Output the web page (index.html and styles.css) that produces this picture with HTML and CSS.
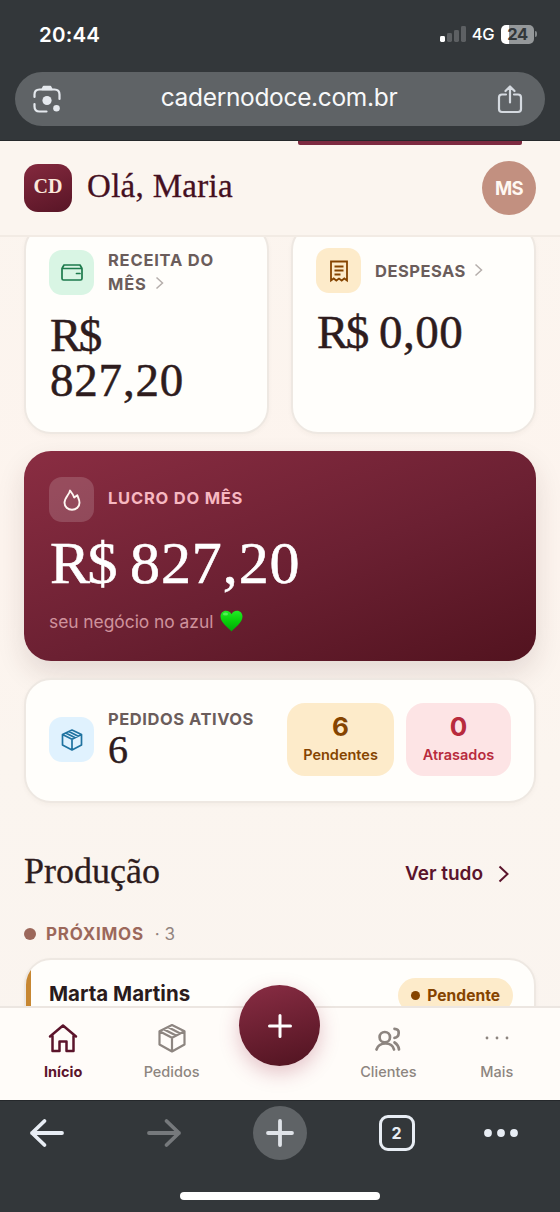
FILE: index.html
```html
<!DOCTYPE html>
<html lang="pt-BR">
<head>
<meta charset="utf-8">
<meta name="viewport" content="width=device-width">
<title>Caderno Doce</title>
<link rel="stylesheet" href="styles.css">
</head>
<body>
<div class="phone">
  <div class="browser-top">
    <div class="status">
      <span class="clock">20:44</span>
      <div class="status-right">
        <svg width="26" height="16" viewBox="0 0 26 16"><rect x="0" y="10" width="5" height="6" rx="1.4" fill="#fff"/><g fill="#5d6063"><rect x="7" y="7" width="5" height="9" rx="1.4"/><rect x="14" y="4" width="5" height="12" rx="1.4"/><rect x="21" y="0" width="5" height="16" rx="1.4"/></g></svg>
        <span class="net">4G</span>
        <div class="battery"><span class="level">24</span><i class="battery-tip"></i></div>
      </div>
    </div>
    <div class="url-bar">
      <svg width="28" height="28" viewBox="0 0 28 28" fill="none" stroke="#e5e9ee" stroke-width="2.2" stroke-linecap="round"><path d="M1.500 12V9.500Q1.500 4.500 6.500 4.500H21.500Q26.500 4.500 26.500 9.500V14M1.500 19V21.500Q1.500 26.500 6.500 26.500H13.500"/><path d="M9 4.500L10.500 1.500H17.500L19 4.500Z" fill="#e5e9ee" stroke-width="1.500" stroke-linejoin="round"/><circle cx="14" cy="15.500" r="4.600" fill="#e5e9ee" stroke="none"/><circle cx="23.500" cy="23.200" r="3.300" fill="#e5e9ee" stroke="none"/></svg>
      <span class="url">cadernodoce.com.br</span>
      <svg width="26" height="29" viewBox="0 0 26 29" fill="none" stroke="#d5dae0" stroke-width="2.200" stroke-linecap="round" stroke-linejoin="round"><path d="M9 9.500H5Q2 9.500 2 12.500V24Q2 27 5 27H21Q24 27 24 24V12.500Q24 9.500 21 9.500H17M13 17.500V2M8.500 6L13 1.500L17.500 6"/></svg>
    </div>
  </div>

  <div class="app">
    <header class="app-header">
      <i class="progress"></i>
      <div class="logo">CD</div>
      <h1 class="hello">Olá, Maria</h1>
      <div class="avatar">MS</div>
    </header>

    <main class="content">
      <div class="pair">
        <section class="card money">
          <div class="card-head">
            <div class="tile green"><svg width="24" height="24" viewBox="0 0 24 24" fill="none" stroke="#1d7a4c" stroke-width="1.700" stroke-linejoin="round" stroke-linecap="round"><path d="M2 8.500H22V18.500Q22 20 20.500 20H3.500Q2 20 2 18.500V8.500L4 5H20L22 8.500M16.500 13.500H20"/></svg></div>
            <span class="label">RECEITA DO<br>MÊS <svg class="chev" width="9" height="14" viewBox="0 0 9 14"><path d="M1.500 1.500L7.500 7L1.500 12.500"/></svg></span>
          </div>
          <div class="value"><span class="currency">R$</span><span class="amount">827,20</span></div>
        </section>
        <section class="card money">
          <div class="card-head">
            <div class="tile amber"><svg width="24" height="24" viewBox="0 0 24 24" fill="none" stroke="#854400" stroke-width="1.800"><path d="M4 2.500H20V21.500L17.300 19.500L14.700 21.500L12 19.500L9.300 21.500L6.700 19.500L4 21.500ZM7.500 7.500H16.500M7.500 11.500H16.500M7.500 15.500H13.500"/></svg></div>
            <span class="label one">DESPESAS <svg class="chev" width="9" height="14" viewBox="0 0 9 14"><path d="M1.500 1.500L7.500 7L1.500 12.500"/></svg></span>
          </div>
          <div class="value zero"><span class="currency">R$</span> 0,00</div>
        </section>
      </div>

      <section class="profit">
        <div class="card-head">
          <div class="tile glass"><svg width="24" height="24" viewBox="0 0 24 24" fill="none" stroke="#fff7f2" stroke-width="1.900" stroke-linejoin="round"><path d="M10 2.500C9.500 6.500 4.500 9.500 4.500 14.800A7.500 7 0 0 0 19.500 14.800C19.500 11.500 18 9.500 17.300 7.200L14.200 9.500C13.500 7 11.500 4.500 10 2.500Z"/></svg></div>
          <span class="label rose">LUCRO DO MÊS</span>
        </div>
        <div class="profit-value"><span class="currency">R$</span> <span class="profit-amount">827,20</span></div>
        <div class="profit-note"><span>seu negócio no azul</span>
          <svg width="23" height="22" viewBox="0 0 23 22"><defs><linearGradient id="heart" x1="0" y1="0" x2="0" y2="1"><stop offset="0" stop-color="#22ea25"/><stop offset=".5" stop-color="#08cf0a"/><stop offset="1" stop-color="#00a509"/></linearGradient></defs><path fill="url(#heart)" d="M11.500 21.500C8.500 18 .5 12.500 .5 6.500C.5 3 3 .7 6 .7C8.600 .7 10.600 2 11.500 4.200C12.400 2 14.400 .7 17 .7C20 .7 22.500 3 22.500 6.500C22.500 12.500 14.500 18 11.500 21.500Z"/><ellipse cx="5.500" cy="4" rx="2.600" ry="1.500" fill="#7ff77d" opacity=".6"/></svg>
        </div>
      </section>

      <section class="card orders">
        <div class="tile blue"><svg width="24" height="24" viewBox="0 0 24 24" fill="none" stroke="#1f73a0" stroke-width="1.700" stroke-linejoin="round"><path d="M12 2L21.500 6.500V17L12 22L2.500 17V6.500ZM2.500 6.500L12 11.300L21.500 6.500M12 11.300V22M8.800 3.500L18.300 8.200M5.700 5L15.200 9.700"/></svg></div>
        <div class="orders-text"><span class="label">PEDIDOS ATIVOS</span><span class="orders-count">6</span></div>
        <div class="stat pending"><b>6</b><span>Pendentes</span></div>
        <div class="stat late"><b>0</b><span>Atrasados</span></div>
      </section>

      <div class="section-head">
        <h2 class="section-title">Produção</h2>
        <a class="see-all">Ver tudo <svg width="11" height="18" viewBox="0 0 11 18" fill="none" stroke="#5b142b" stroke-width="2"><path d="M1.500 1.500L9.500 9L1.500 16.500"/></svg></a>
      </div>
      <div class="group"><i class="group-dot"></i><b>PRÓXIMOS</b><span>· 3</span></div>

      <section class="card order">
        <span class="client">Marta Martins</span>
        <span class="badge"><i></i>Pendente</span>
      </section>
    </main>

    <nav class="tabs">
      <a class="tab active"><svg width="32" height="32" viewBox="0 0 32 32" fill="none" stroke="currentColor" stroke-width="2.500" stroke-linejoin="round" stroke-linecap="round"><path d="M3 14.500L16 3.500L29 14.500M5.500 12.500V29H12.500V19.500H19.500V29H26.500V12.500"/></svg>Início</a>
      <a class="tab"><svg width="32" height="32" viewBox="0 0 32 32" fill="none" stroke="currentColor" stroke-width="2.200" stroke-linejoin="round"><path d="M16 3L28.500 9.300V22.500L16 29.500L3.500 22.500V9.300ZM3.500 9.300L16 15.800L28.500 9.300M16 15.800V29.500M11.800 5.100L24.300 11.500M7.600 7.200L20.100 13.600"/></svg>Pedidos</a>
      <a class="fab" aria-label="Novo"><svg width="26" height="26" viewBox="0 0 26 26" stroke="#fff" stroke-width="3" stroke-linecap="round"><path d="M2.500 13H23.500M13 2.500V23.500"/></svg></a>
      <a class="tab"><svg width="32" height="32" viewBox="0 0 32 32" fill="none" stroke="currentColor" stroke-width="2.700" stroke-linecap="round"><circle cx="12.800" cy="15.200" r="5.200"/><path d="M4.500 27.500Q6.500 21.500 13.500 21.500Q20.500 21.500 22 27.500M22.500 6.800Q27 7 26.700 11Q26.500 15.500 22.500 15.800M22.500 20.500Q26.500 23 27 27.500"/></svg>Clientes</a>
      <a class="tab"><svg width="32" height="32" viewBox="0 0 32 32" fill="currentColor"><circle cx="6" cy="16" r="1.400"/><circle cx="16" cy="16" r="1.400"/><circle cx="26" cy="16" r="1.400"/></svg>Mais</a>
    </nav>
  </div>

  <div class="browser-bottom">
    <div class="tools">
      <span class="tool"><svg width="36" height="30" viewBox="0 0 36 30" fill="none" stroke="#e8edf4" stroke-width="3.800" stroke-linecap="round" stroke-linejoin="round"><path d="M33 15H3M15.500 3L3 15L15.500 27"/></svg></span>
      <span class="tool"><svg width="36" height="30" viewBox="0 0 36 30" fill="none" stroke="#76797c" stroke-width="3.800" stroke-linecap="round" stroke-linejoin="round"><path d="M3 15H33M20.500 3L33 15L20.500 27"/></svg></span>
      <span class="tool round"><svg width="30" height="30" viewBox="0 0 30 30" stroke="#dfe3e8" stroke-width="3.800" stroke-linecap="round"><path d="M3 15H27M15 3V27"/></svg></span>
      <span class="tool"><span class="tab-count">2</span></span>
      <span class="tool"><svg width="36" height="10" viewBox="0 0 36 10" fill="#e8edf4"><circle cx="5" cy="5" r="3.900"/><circle cx="18" cy="5" r="3.900"/><circle cx="31" cy="5" r="3.900"/></svg></span>
    </div>
    <i class="home-bar"></i>
  </div>
</div>
</body>
</html>
```
FILE: styles.css
```css
* { box-sizing: border-box; }
body { margin: 0; font-family: Inter, "Liberation Sans", sans-serif; background: #33373a; }
svg { display: block; flex: none; }
h1, h2 { margin: 0; font-weight: 400; }

.phone { display: grid; grid-template-rows: 141px 959px 112px; width: 560px; height: 1212px; overflow: hidden; }

/* Browser chrome, top */
.browser-top { background: #33373a; padding: 20px 15px 0; color: #fff; border-bottom: 1px solid #25282b; }
.status { display: flex; justify-content: space-between; align-items: center; height: 28px; padding: 0 8px 0 24px; }
.clock { font-size: 20.500px; font-weight: 600; letter-spacing: .2px; }
.status-right { display: flex; align-items: center; }
.net { font-size: 16.500px; font-weight: 500; margin: 0 7px 0 6px; letter-spacing: -.5px; }
.battery { display: flex; align-items: center; }
.level { width: 33px; height: 19px; border-radius: 5px; background: linear-gradient(90deg, #fff 8px, #95989a 8px); color: #33373a; font-size: 16.500px; line-height: 19px; font-weight: 700; text-align: center; letter-spacing: -.5px; }
.battery-tip { width: 2px; height: 6px; margin-left: 1px; border-radius: 0 2px 2px 0; background: #85898b; }
.url-bar { display: flex; align-items: center; justify-content: space-between; height: 54px; margin-top: 24px; padding: 0 22px 0 18px; border-radius: 27px; background: #5f6366; }
.url { font-size: 24.500px; color: #f7f8f9; letter-spacing: -.33px; margin-top: -4px; }

/* App */
.app { display: flex; flex-direction: column; min-height: 0; background: linear-gradient(180deg, #fbf5ef 0, #fdf4ee 420px, #fbf5ef 620px, #faf4ef 100%); }
.app-header { position: relative; display: flex; align-items: center; flex: none; height: 96px; padding: 0 24px; background: #fbf5ef; border-bottom: 2px solid #f2ebe4; }
.progress { position: absolute; top: 0; left: 298px; width: 224px; height: 4px; background: #7d2a40; border-radius: 0 0 2px 2px; }
.logo { width: 48px; height: 48px; border-radius: 14px; background: linear-gradient(160deg, #84293e, #581526); color: #fbe8dc; font: 700 20px/44px "Liberation Serif", serif; text-align: center; }
.hello { margin: -4px auto 0 15px; font: 33px/40px "Liberation Serif", serif; color: #45101f; letter-spacing: .3px; -webkit-text-stroke: .3px #45101f; }
.avatar { width: 54px; height: 54px; border-radius: 50%; background: #c29080; color: #fff8f2; font-size: 18.500px; line-height: 54px; font-weight: 700; text-align: center; letter-spacing: -.6px; }

.content { flex: 1; min-height: 0; overflow: hidden; padding: 0 24px; }
.card { background: #fffefb; border: 2px solid #eee8e2; border-radius: 27px; box-shadow: 0 2px 5px rgba(80, 40, 20, .04); }
.pair { display: grid; grid-template-columns: 1fr 1fr; gap: 22px; margin-top: -14px; }
.money { height: 211px; padding: 23px 23px 0; }
.card-head { display: flex; align-items: center; gap: 14px; }
.tile { display: grid; place-items: center; flex: none; width: 45px; height: 45px; border-radius: 13px; }
.green { background: #d9f5e4; }
.amber { background: #fdebca; }
.blue { background: #e0f2fe; }
.glass { background: rgba(255, 255, 255, .16); }
.label { font-size: 16.500px; line-height: 24px; font-weight: 700; letter-spacing: .78px; color: #6b5d5b; white-space: nowrap; }
.one { letter-spacing: .5px; }
.chev { display: inline-block; margin-left: 4px; fill: none; stroke: #b5aeab; stroke-width: 1.500; }
.value { margin: 17px 0 0 1px; font: 47px/45px "Liberation Serif", serif; color: #2e1c1d; -webkit-text-stroke: .5px #2e1c1d; }
.value .currency { letter-spacing: -2.500px; }
.value .amount { display: block; letter-spacing: .8px; }
.zero { letter-spacing: .5px; }

.profit { height: 210px; margin-top: 17px; padding: 26px 25px; border-radius: 27px; background: linear-gradient(160deg, #8a2d42 0, #6b2032 55%, #52131f 100%); box-shadow: 0 12px 28px rgba(65, 30, 30, .13); color: #fff; }
.rose { margin-top: -3px; color: #f7b8c1; }
.profit-value { margin: 11px 0 0 1px; font: 60px/60px "Liberation Serif", serif; -webkit-text-stroke: .6px #fff; white-space: nowrap; }
.profit-value .currency { letter-spacing: -2.500px; }
.profit-amount { letter-spacing: .9px; }
.profit-note { display: flex; align-items: center; gap: 7px; height: 24px; margin-top: 16px; font-size: 17.400px; letter-spacing: 0; color: #cf929c; }
.profit-note span { letter-spacing: -.03px; }

.orders { display: flex; align-items: center; height: 125px; margin-top: 17px; padding: 0 23px 2px; }
.orders-text { display: flex; flex-direction: column; flex: 1; margin: -4px 0 0 14px; }
.orders-text .label { letter-spacing: .55px; }
.orders-count { font: 40px/38px "Liberation Serif", serif; color: #2e1c1d; -webkit-text-stroke: .4px #2e1c1d; }
.stat { display: flex; flex-direction: column; align-items: center; width: 107px; height: 73px; padding-top: 8px; border-radius: 18px; }
.stat b { font-size: 26px; line-height: 32px; }
.stat span { font-size: 14.500px; line-height: 24px; font-weight: 600; }
.pending { background: #fdebca; color: #854400; }
.late { width: 105px; margin-left: 12px; background: #fde4e5; color: #b82b3d; }

.section-head { display: flex; align-items: center; justify-content: space-between; margin-top: 46px; height: 46px; }
.section-title { margin-top: -3px; font: 36px/42px "Liberation Serif", serif; color: #2e1c1d; -webkit-text-stroke: .3px #2e1c1d; }
.see-all { display: flex; align-items: center; gap: 15px; margin: 3px 27px 0 0; font-size: 19px; font-weight: 600; color: #5b142b; }
.group { display: flex; align-items: center; height: 24px; margin-top: 27px; font-size: 17px; }
.group-dot { width: 12px; height: 12px; margin-right: 10px; border-radius: 50%; background: #9c685b; }
.group b { color: #9c685b; letter-spacing: .75px; }
.group span { margin-left: 11px; color: #92847f; }
.order { display: flex; justify-content: space-between; height: 120px; margin-top: 12px; padding: 17px 21px 0 23px; background: linear-gradient(90deg, #c78732 5px, #fffefb 5px); overflow: hidden; }
.client { font-size: 20.500px; line-height: 34px; font-weight: 700; color: #2a1b1c; }
.badge { display: flex; align-items: center; gap: 7px; height: 35px; margin-top: 1px; padding: 0 13px; border-radius: 18px; background: #fdebca; color: #854400; font-size: 15.600px; font-weight: 700; }
.badge i { width: 9px; height: 9px; border-radius: 50%; background: #854400; }

.tabs { position: relative; display: grid; grid-template-columns: 1fr 1fr 1fr 1fr 1fr; flex: none; height: 94px; padding: 0 9px; background: #fffcf9; border-top: 2px solid #ece6e1; }
.tab { display: flex; flex-direction: column; align-items: center; gap: 7px; padding-top: 14px; font-size: 14.500px; line-height: 22px; font-weight: 500; color: #8d8580; }
.active { color: #5b142b; font-weight: 700; }
.fab { display: grid; place-items: center; justify-self: center; width: 81px; height: 81px; margin-top: -23px; border-radius: 50%; background: linear-gradient(165deg, #892d44, #501320); box-shadow: 0 7px 20px rgba(150, 30, 60, .26); }

/* Browser chrome, bottom */
.browser-bottom { background: #33373a; border-top: 1px solid #25282b; }
.tools { display: flex; gap: 62.500px; align-items: center; height: 54px; margin-top: 5px; padding-left: 20px; }
.tool { display: grid; place-items: center; width: 54px; height: 54px; }
.round { border-radius: 50%; background: #5f6366; }
.tools .tool:last-child { width: 36px; margin-left: -3px; }
.tab-count { width: 36px; height: 36px; border: 3px solid #e8edf4; border-radius: 9px; color: #e8edf4; font-size: 16px; line-height: 31px; font-weight: 700; text-align: center; }
.home-bar { display: block; width: 200px; height: 8px; margin: 32px auto 0; border-radius: 4px; background: #fff; }
```
